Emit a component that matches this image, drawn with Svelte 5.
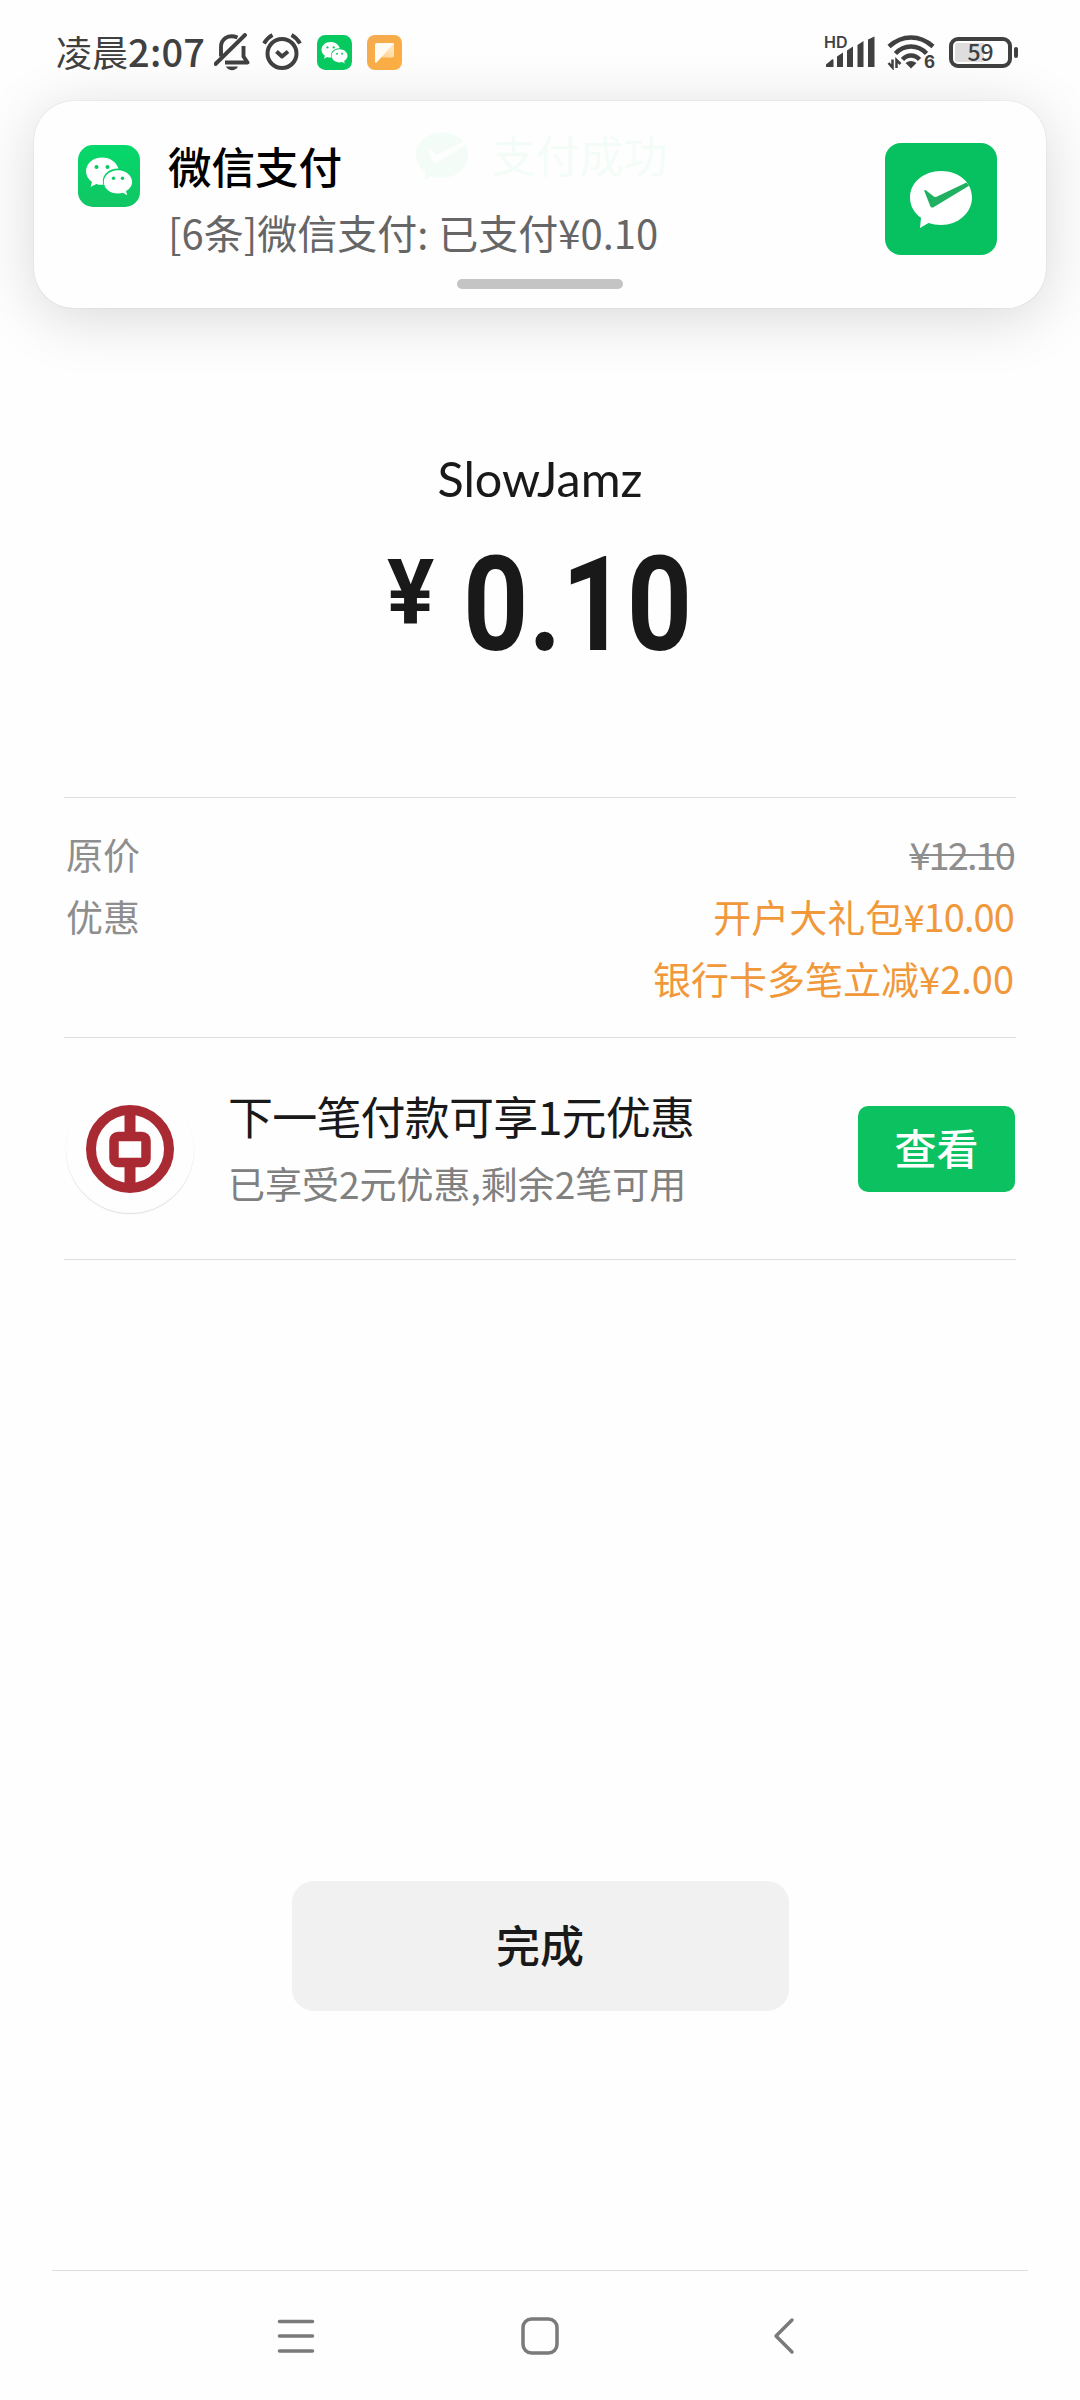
<script>
  const discounts = [
    { name: '开户大礼包', value: '¥10.00', tight: true },
    { name: '银行卡多笔立减', value: '¥2.00', tight: false },
  ];
</script>

{#snippet wechat()}
  <path fill="#fff" d="M24 12.400c-9 0-16 6.100-16 13.800 0 4.300 2.300 8.100 6 10.700l-1.500 5 5.800-3c1.800.6 3.700.9 5.700.9h1.400c-.4-1.200-.6-2.400-.6-3.700 0-7.200 6.700-12.700 15-12.700h.6C38.700 17.200 32.100 12.400 24 12.400z" />
  <path fill="#fff" d="M40 25.200c-7.900 0-14.200 5.200-14.200 11.700S32.100 48.500 40 48.500c1.700 0 3.300-.2 4.800-.7l4.400 2.500-1.200-4.200c3.500-2.100 6.100-5.400 6.100-9.200C54.100 30.400 47.900 25.200 40 25.200z" />
  <g fill="#0bc662">
    <circle cx="18.500" cy="22" r="2" /><circle cx="29.500" cy="22" r="2" />
    <circle cx="35.500" cy="33.300" r="1.700" /><circle cx="44.500" cy="33.300" r="1.700" />
  </g>
{/snippet}

{#snippet payBubble(mark)}
  <path fill="#fff" class="bubble" d="M32 1C14.500 1 1 12.500 1 27.500c0 8.500 4.300 15.500 11 20.300L11 58l8.500-5c4 1.300 8 2 12.500 2 17 0 31-12 31-27.500S49.500 1 32 1z" />
  <path fill={mark} d="M15.500 21.500c-.6-1 .3-1.800 1.300-1.200l8 6.300c.8.5 1.800.5 2.700.1L57.500 12.500l2.500 3.300L24.500 37.200c-1.300.8-2.600.4-3.200-1z" />
{/snippet}

<div class="page">
  <header class="status">
    <span class="time">凌晨<b>2:07</b></span>
    <svg class="bell" width="36" height="38" viewBox="0 0 36 38" fill="none" stroke="#404040" stroke-width="3.900">
      <path d="M23.500 4.500C14 .5 7 6.500 7 14v9.500M29.500 13v10.500l4 6H11" stroke-linejoin="round" />
      <path d="M1.500 31 31 2" stroke-linecap="round" />
      <path d="M12 33.500h12c-2.500 5-9.500 5-12 0z" fill="#404040" stroke="none" />
    </svg>
    <svg class="alarm" width="40" height="38" viewBox="0 0 40 38" fill="none" stroke="#404040" stroke-width="4">
      <circle cx="20" cy="20.500" r="14.500" />
      <path d="M2 10.500Q5 5 10.500 2M29.500 2Q35 5 38 10.500" stroke-width="3.800" />
      <path d="m14.500 18.500 5.500 5 6-5" stroke-linejoin="round" />
    </svg>
    <svg class="app" width="35" height="35" viewBox="0 0 62 62">
      <rect width="62" height="62" rx="15" fill="#06c95f" />
      {@render wechat()}
    </svg>
    <svg class="note" width="35" height="35" viewBox="0 0 35 35">
      <defs>
        <linearGradient id="orange" x1="0" y1="0" x2="1" y2="1">
          <stop offset="0" stop-color="#f4ab50" /><stop offset="1" stop-color="#fdae40" />
        </linearGradient>
        <linearGradient id="fold" x1="1" y1="0" x2="0" y2="1">
          <stop offset="0" stop-color="#ffeccc" /><stop offset="1" stop-color="#ffc777" />
        </linearGradient>
      </defs>
      <rect width="35" height="35" rx="8" fill="url(#orange)" />
      <path d="M27 9v11q0 2.500-2.500 2.500H14L9 27.500z" fill="url(#fold)" />
      <path d="M9.500 8H26q1 0 1 1L9.500 27.500q-1.500.8-1.500-.8V9.500Q8 8 9.500 8z" fill="#fffaf2" />
    </svg>
    <span class="grow"></span>
    <div class="signal">
      <span class="hd">HD</span>
      <svg width="50" height="32" viewBox="0 0 50 32" fill="#404040">
        <path d="M0 31v-2.500l6-5q1.500-1 1.500 1V31zM11 31V20.500l6-4V31zM21 31V14.500l6-4V31zM31.500 31V9l6-4v26zM42 31V3.500l6.500-3V31z" />
      </svg>
    </div>
    <div class="wifi">
      <svg width="48" height="36" viewBox="0 0 48 36" fill="none" stroke="#404040" stroke-width="4.500">
        <path d="M2 12.500Q12 3.500 24 3.500t22 9M8.500 19.500Q15 12.500 24 12.500t15.500 7M15.500 25.500q3.500-4 8.500-4t8.500 4" />
        <path d="M18.500 29q5.500-4 11 0L24 34.500z" fill="#404040" stroke="none" />
        <path d="M5.500 25.500v8L1.500 29M9.500 34v-8l4 4" stroke-width="2.500" />
      </svg>
      <span class="six">6</span>
    </div>
    <div class="battery"><span>59</span></div>
    <i class="nub"></i>
  </header>

  <div class="success">
    <svg width="54" height="50" viewBox="0 0 64 58">{@render payBubble('#fff')}</svg>
    <span>支付成功</span>
  </div>

  <section class="notice">
    <svg class="logo" width="62" height="62" viewBox="0 0 62 62">
      <defs>
        <linearGradient id="green" x1="0" y1="0" x2="0" y2="1">
          <stop offset="0" stop-color="#05d86a" /><stop offset="1" stop-color="#10c663" />
        </linearGradient>
      </defs>
      <rect width="62" height="62" rx="15" fill="url(#green)" />
      {@render wechat()}
    </svg>
    <div class="message">
      <strong>微信支付</strong>
      <p>[6条]微信支付: 已支付¥0.10</p>
    </div>
    <div class="thumb">
      <svg width="64" height="58" viewBox="0 0 64 58">{@render payBubble('#20b061')}</svg>
    </div>
    <i class="handle"></i>
  </section>

  <main>
    <h1><span>SlowJamz</span></h1>
    <div class="amount"><span class="yen">¥</span><span class="value">0.10</span></div>

    <div class="prices">
      <div class="row"><span class="label">原价</span><s>¥12.10</s></div>
      <div class="row">
        <span class="label">优惠</span>
        <div class="discounts">
          {#each discounts as item}
            <span>{item.name}<span class:tight={item.tight}>{item.value}</span></span>
          {/each}
        </div>
      </div>
    </div>

    <div class="promo">
      <div class="bank">
        <svg width="88" height="88" viewBox="0 0 88 88" fill="none" stroke="#aa2a33">
          <circle cx="44" cy="44" r="39" stroke-width="10" />
          <rect x="28" y="31.500" width="32" height="26" rx="4" stroke-width="9.500" />
          <path d="M44 4v24M44 60v24" stroke-width="11" />
        </svg>
      </div>
      <div class="offer">
        <strong>下一笔付款可享1元优惠</strong>
        <p>已享受2元优惠,剩余2笔可用</p>
      </div>
      <button class="view">查看</button>
    </div>
  </main>

  <button class="done">完成</button>

  <nav>
    <svg width="38" height="36" viewBox="0 0 38 36" stroke="#7a7a7a" stroke-width="3.600" stroke-linecap="round">
      <path d="M2.500 3.500h33M2.500 18h33M2.500 33h33" />
    </svg>
    <svg width="38" height="38" viewBox="0 0 38 38" fill="none" stroke="#7a7a7a" stroke-width="3.500">
      <rect x="2" y="2" width="34" height="34" rx="8.500" />
    </svg>
    <svg width="22" height="38" viewBox="0 0 22 38" fill="none" stroke="#7a7a7a" stroke-width="3.500" stroke-linecap="round" stroke-linejoin="round">
      <path d="M19 3 3 19l16 16" />
    </svg>
  </nav>
</div>

<style>
  :global(body) { background: #fefefe; }
  * { box-sizing: border-box; margin: 0; }
  .page {
    position: relative;
    display: flex;
    flex-direction: column;
    width: 1080px;
    height: 2400px;
    overflow: hidden;
    background: #fefefe;
    color: #191919;
    font-family: "Noto Sans CJK SC", sans-serif;
  }
  svg { display: block; flex: none; }
  button { border: 0; padding: 0 0 4px; font-family: inherit; }

  .status {
    position: relative;
    z-index: 2;
    display: flex;
    align-items: center;
    height: 104px;
    padding: 0 62px 0 56px;
    color: #404040;
  }
  .time { width: 158px; padding-bottom: 3px; font-size: 36px; line-height: 40px; white-space: nowrap; }
  .time b { font-size: 38px; font-weight: 500; letter-spacing: 0.2px; }
  .alarm { margin-left: 12px; }
  .app { margin-left: 15px; }
  .note { margin-left: 15px; }
  .grow { flex: 1; }
  .signal { position: relative; margin-right: 11px; }
  .hd { position: absolute; left: -2px; top: -2px; font: 600 16px/16px Inter, sans-serif; }
  .wifi { position: relative; margin-right: 14px; }
  .six { position: absolute; right: 0; bottom: -1px; font: 700 17px/17px Inter, sans-serif; }
  .battery {
    width: 63px;
    height: 31px;
    border: 4px solid #404040;
    border-radius: 9px;
    background: linear-gradient(90deg, #dedede 56%, transparent 56%) content-box;
    padding: 2px;
    text-align: center;
  }
  .battery span { display: block; font: 500 23px/16px "Noto Sans CJK SC", sans-serif; }
  .nub { width: 4px; height: 11px; margin-left: 2px; border-radius: 2px; background: #404040; }

  .success {
    display: flex;
    align-items: center;
    justify-content: center;
    gap: 23px;
    height: 104px;
    padding-left: 2px;
    color: #07c160;
    font-size: 44px;
    line-height: 60px;
  }
  .success span { padding-bottom: 5px; }
  .success .bubble { fill: #07c160; }

  .notice {
    position: absolute;
    left: 34px;
    top: 101px;
    width: 1012px;
    height: 207px;
    padding: 42px 49px 0 44px;
    display: flex;
    align-items: flex-start;
    border-radius: 40px;
    background: rgba(254, 254, 254, 0.96);
    box-shadow: 0 0 1px rgba(0, 0, 0, 0.3), 0 10px 60px rgba(0, 0, 0, 0.15);
  }
  .logo { margin-top: 2px; }
  .message { flex: 1; margin-left: 28px; }
  .message strong { display: block; margin-top: -1px; font-size: 43.500px; line-height: 48px; font-weight: 500; color: #000; }
  .message p { margin-top: 18px; font-size: 40px; line-height: 48px; word-spacing: 1px; color: #666; white-space: nowrap; }
  .thumb {
    display: flex;
    align-items: center;
    justify-content: center;
    width: 112px;
    height: 112px;
    border-radius: 16px;
    background: #07c160;
  }
  .handle { position: absolute; left: 423px; top: 178px; width: 166px; height: 10px; border-radius: 5px; background: #c4c4c4; }

  main { padding: 0 64px; }
  h1 {
    margin-top: 240px;
    font: 400 48.500px/60px Lato, sans-serif;
    letter-spacing: 0;
    text-align: center;
  }
  .amount {
    display: flex;
    height: 289px;
    padding-left: 323px;
    font-family: Roboto, sans-serif;
    font-weight: 700;
  }
  .yen { width: 76px; padding-top: 39.500px; font-size: 91px; line-height: 91px; transform: scaleX(0.97); transform-origin: left; }
  .value { padding-top: 32px; font-size: 131px; line-height: 131px; transform: scaleX(0.87); transform-origin: left; }

  .prices {
    height: 240px;
    padding: 25px 2px 0;
    border-top: 1px solid #dedede;
    font-size: 38px;
    line-height: 62px;
    color: #8e8e8e;
  }
  .row { display: flex; justify-content: space-between; }
  .label { font-size: 37px; }
  .prices s { letter-spacing: -1.900px; text-decoration-thickness: 2px; }
  .tight { letter-spacing: -0.9px; }
  .discounts { display: flex; flex-direction: column; align-items: flex-end; color: #f0983a; }

  .promo {
    display: flex;
    align-items: center;
    height: 223px;
    border-top: 1px solid #dedede;
    border-bottom: 1px solid #dedede;
  }
  .bank {
    display: flex;
    align-items: center;
    justify-content: center;
    width: 128px;
    height: 128px;
    margin-left: 2px;
    border-radius: 50%;
    box-shadow: 0 1px 1px #dedede;
  }
  .offer { flex: 1; margin-left: 34px; }
  .offer strong { display: block; font-size: 45px; line-height: 60px; font-weight: 400; letter-spacing: -0.8px; }
  .offer p { margin-top: 9px; font-size: 37px; line-height: 56px; color: #808080; }
  .view {
    width: 157px;
    height: 86px;
    margin-right: 1px;
    border-radius: 10px;
    background: #0bc160;
    color: #fff;
    font-size: 42px;
    font-weight: 500;
  }

  .done {
    align-self: center;
    width: 497px;
    height: 130px;
    margin-top: 621px;
    border-radius: 22px;
    background: #f1f1f1;
    color: #191919;
    font-size: 44px;
    font-weight: 500;
  }

  nav {
    display: grid;
    grid-template-columns: repeat(3, 244px);
    justify-content: center;
    justify-items: center;
    align-items: center;
    height: 130px;
    margin: auto 52px 0;
    border-top: 1px solid #dedede;
  }
</style>
